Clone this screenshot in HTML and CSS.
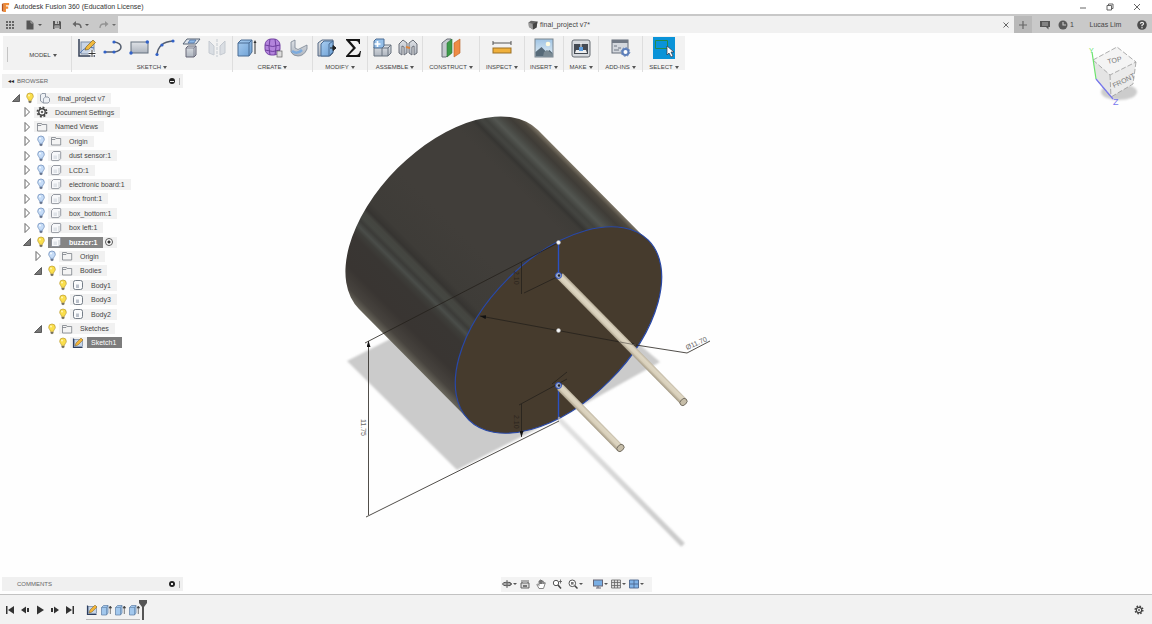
FILE: index.html
```html
<!DOCTYPE html>
<html lang="en">
<head>
<meta charset="utf-8">
<title>Autodesk Fusion 360 (Education License)</title>
<link rel="stylesheet" href="styles.css">
</head>
<body>
<svg class="defs" width="0" height="0" aria-hidden="true">
  <defs>
    <linearGradient id="blue" x1="0" y1="0" x2="1" y2="1"><stop offset="0" stop-color="#a9cdf0"/><stop offset="1" stop-color="#6b9fd4"/></linearGradient>
    <linearGradient id="grey" x1="0" y1="0" x2="0" y2="1"><stop offset="0" stop-color="#dfe2e6"/><stop offset="1" stop-color="#aeb5bf"/></linearGradient>
    <linearGradient id="sky" x1="0" y1="0" x2="0" y2="1"><stop offset="0" stop-color="#9fc4e4"/><stop offset="1" stop-color="#e6f0f6"/></linearGradient>
  </defs>
  <symbol id="closed" viewBox="0 0 12 12"><path d="M4 1.500v9L8.500 6z" fill="#fff" stroke="#666" stroke-width="1"/></symbol>
  <symbol id="open" viewBox="0 0 12 12"><path d="M9.500 2.500v7h-7z" fill="#777" stroke="#444" stroke-width=".8"/></symbol>
  <symbol id="bulb-on" viewBox="0 0 12 12"><path d="M6 1a3.3 3.3 0 0 0-3.3 3.3C2.700 6 4.300 6.600 4.500 8.400h3C7.700 6.600 9.300 6 9.300 4.300A3.300 3.300 0 0 0 6 1z" fill="#fbdf4c" stroke="#b99a2e" stroke-width=".7"/><path d="M4.500 9h3v1.200L6 11.200 4.500 10.200z" fill="#77705a"/><circle cx="5" cy="3.500" r="1" fill="#fff6b8"/></symbol>
  <symbol id="bulb-off" viewBox="0 0 12 12"><path d="M6 1a3.3 3.3 0 0 0-3.3 3.3C2.700 6 4.300 6.600 4.500 8.400h3C7.700 6.600 9.300 6 9.300 4.300A3.300 3.300 0 0 0 6 1z" fill="#c6dcf7" stroke="#7290bd" stroke-width=".8"/><path d="M4.500 9h3v1.200L6 11.200 4.500 10.200z" fill="#66738c"/><circle cx="5" cy="3.500" r="1" fill="#f5faff"/></symbol>
  <symbol id="folder" viewBox="0 0 12 12"><path d="M1.500 10V2.500h4l.7 1h4.500V10z M1.500 4.500h3.500l1-1" fill="#f4f4f4" stroke="#7a7f86" stroke-width=".8"/></symbol>
  <symbol id="component" viewBox="0 0 12 12"><path d="M1.500 4q0-.6.500-1L3.500 1.500H10q.7 0 .7.700V8.500L9 10.300q-.3.300-.8.300H2.200q-.7 0-.7-.7z" fill="#f7f8fa" stroke="#7c828c" stroke-width=".8"/><path d="M9 10.300V4" stroke="#a9aeb6" stroke-width=".6"/><path d="M3.500 5.500h3.500v3.500H3.500z" fill="#dfe3e8"/></symbol>
  <symbol id="body" viewBox="0 0 12 12"><rect x="1.500" y="1.500" width="9" height="9" rx="2" fill="#fafbfc" stroke="#68707c" stroke-width=".9"/><path d="M4 5.500h3V9H4z" fill="#bac0ca"/></symbol>
  <symbol id="assembly" viewBox="0 0 12 12"><path d="M1.500 3L3 1.500h3.500V5H9l1.500 1.500v3L9 11H4.500L1.500 9z" fill="#eef1f5" stroke="#7c8796" stroke-width=".8"/><path d="M4.500 11V6.500L6.500 5" fill="none" stroke="#7c8796" stroke-width=".7"/></symbol>
  <symbol id="gear" viewBox="0 0 12 12"><circle cx="6" cy="6" r="4.600" fill="none" stroke="#444" stroke-width="1.700" stroke-dasharray="1.900 1.712"/><circle cx="6" cy="6" r="3.200" fill="#fff" stroke="#444" stroke-width="1.400"/><circle cx="6" cy="6" r="1.300" fill="#666"/></symbol>
  <symbol id="sketch-small" viewBox="0 0 12 12"><path d="M1.500 1.500v9h9" fill="none" stroke="#2c3e60" stroke-width="1.200"/><rect x="2.500" y="2.500" width="8" height="7" fill="#c5d4e8" stroke="#5d7393" stroke-width=".6"/><path d="M3 9l1-3 5-5 2 2-5 5z" fill="#f2b437" stroke="#7d622c" stroke-width=".5"/></symbol>
  <symbol id="extrude-small" viewBox="0 0 12 12"><path d="M1.500 3.500L3.500 1.500H8V9L6.500 11h-5z" fill="#a3c8ed" stroke="#5d7da3" stroke-width=".7"/><path d="M1.500 3.500h5V11M6.500 3.500L8 1.500" fill="none" stroke="#5d7da3" stroke-width=".6"/><path d="M10.300 3v7M9 4l1.300-2 1.300 2z" stroke="#444" stroke-width=".7" fill="#444"/></symbol>
</svg>

<header class="titlebar">
  <svg class="logo" viewBox="0 0 10 10"><path d="M1 1l2-1v10L1 9z" fill="#b5511b"/><path d="M3 0h6v2.500H5.500v1.500H8v2.500H5.500V10H3z" fill="#ef8b36"/></svg>
  <h1 class="app-title">Autodesk Fusion 360 (Education License)</h1>
  <div class="window-controls">
    <button aria-label="Minimize"><svg viewBox="0 0 10 10"><path d="M2 6h6" stroke="#666"/></svg></button>
    <button aria-label="Restore"><svg viewBox="0 0 10 10"><path d="M2 3.500h4.500v4.500H2zM3.500 3.500V2H8v4.500H6.500" fill="none" stroke="#555" stroke-width=".9"/></svg></button>
    <button aria-label="Close"><svg viewBox="0 0 10 10"><path d="M2 2l6 6M8 2L2 8" stroke="#555" stroke-width=".9"/></svg></button>
  </div>
</header>

<nav class="tabbar">
  <div class="quick">
    <button aria-label="Data panel"><svg viewBox="0 0 10 10" fill="#666"><path d="M1 1h2v2H1zM4 1h2v2H4zM7 1h2v2H7zM1 4h2v2H1zM4 4h2v2H4zM7 4h2v2H7zM1 7h2v2H1zM4 7h2v2H4zM7 7h2v2H7z"/></svg></button>
    <button class="drop" aria-label="File"><svg viewBox="0 0 10 10"><path d="M1.500.5H6L8.500 3v6.500h-7z" fill="#555"/><path d="M6 .5V3h2.500" fill="none" stroke="#c8c8c8" stroke-width=".7"/></svg></button>
    <button aria-label="Save"><svg viewBox="0 0 10 10"><path d="M1 1h7l1 1v7H1z" fill="#555"/><path d="M3 1h4v3H3zM2.500 5.500h5V9h-5z" fill="#c4c4c4"/><path d="M5.500 1.500v2M3 7h4" stroke="#555" stroke-width=".8"/></svg></button>
    <button class="drop" aria-label="Undo"><svg viewBox="0 0 10 10"><path d="M2 4h3.500Q9 4 9 8" fill="none" stroke="#666" stroke-width="1.500"/><path d="M4 1v6L.5 4z" fill="#666"/></svg></button>
    <button class="drop faded" aria-label="Redo"><svg viewBox="0 0 10 10"><path d="M8 4H4.500Q1 4 1 8" fill="none" stroke="#888" stroke-width="1.300"/><path d="M6 1v6l3.500-3z" fill="#888"/></svg></button>
  </div>
  <div class="doc-tab">
    <svg class="doc-icon" viewBox="0 0 10 10"><path d="M.5 2.500L3 .8l6.500.7-1 6L5 9.500 1 7z" fill="#666"/><path d="M.5 2.500L4.800 4 5 9.500 1 7z" fill="#9a9a9a"/><path d="M4.800 4l4.700-2.500-1 6L5 9.500z" fill="#444"/></svg>
    <span>final_project v7*</span>
    <button class="tab-close" aria-label="Close tab"><svg viewBox="0 0 10 10"><path d="M2.500 2.500l5 5M7.500 2.500l-5 5" stroke="#666"/></svg></button>
  </div>
  <div class="account">
    <button class="new-tab" aria-label="New tab"><svg viewBox="0 0 10 10"><path d="M5 1v8M1 5h8" stroke="#666" stroke-width="1.200"/></svg></button>
    <button aria-label="Feedback"><svg class="wide" viewBox="0 0 12 10"><path d="M1 1h10v6H9.500V9.500L7 7H1z" fill="#555"/><path d="M3 3h6M3 5h6" stroke="#c9c9c9" stroke-width=".8"/></svg></button>
    <button class="jobs"><svg viewBox="0 0 10 10"><circle cx="5" cy="5" r="4.500" fill="#5a5a5a"/><path d="M5 2v3h3" fill="none" stroke="#ccc" stroke-width="1.100"/></svg>1</button>
    <button class="user">Lucas Lim</button>
    <button aria-label="Help"><svg viewBox="0 0 10 10"><circle cx="5" cy="5" r="4.800" fill="#4c4c4c"/><path d="M3.400 3.800Q3.500 2.300 5 2.300t1.600 1.400Q6.500 4.500 5 5.200v1" fill="none" stroke="#eee" stroke-width="1.200"/><circle cx="5" cy="7.700" r=".7" fill="#eee"/></svg></button>
  </div>
</nav>

<main class="workspace">
  <svg class="model" viewBox="0 33 1152 561" role="img" aria-label="Buzzer model">
    <defs>
      <linearGradient id="side" gradientUnits="userSpaceOnUse" x1="359" y1="309" x2="538" y2="130">
        <stop offset="0" stop-color="#68655b"/><stop offset=".03" stop-color="#47433e"/><stop offset=".09" stop-color="#393532"/><stop offset=".19" stop-color="#393633"/><stop offset=".215" stop-color="#3e3e3a"/><stop offset=".23" stop-color="#4a4d49"/><stop offset=".25" stop-color="#3b3b38"/><stop offset=".265" stop-color="#454742"/><stop offset=".285" stop-color="#444540"/><stop offset=".3" stop-color="#363431"/><stop offset=".33" stop-color="#3e3c38"/><stop offset=".5" stop-color="#413e3a"/><stop offset=".78" stop-color="#413e3a"/><stop offset=".835" stop-color="#3e3c38"/><stop offset=".85" stop-color="#363532"/><stop offset=".87" stop-color="#444541"/><stop offset=".885" stop-color="#40413d"/><stop offset=".91" stop-color="#535651"/><stop offset=".93" stop-color="#484944"/><stop offset=".955" stop-color="#3f3c37"/><stop offset=".98" stop-color="#4d483f"/><stop offset="1" stop-color="#81796a"/>
      </linearGradient>
      <linearGradient id="rodA" gradientUnits="userSpaceOnUse" x1="618" y1="341" x2="624" y2="335"><stop offset="0" stop-color="#a69c87"/><stop offset=".35" stop-color="#d9d0bb"/><stop offset=".7" stop-color="#ded6c3"/><stop offset="1" stop-color="#b5ab96"/></linearGradient>
      <linearGradient id="rodB" gradientUnits="userSpaceOnUse" x1="587" y1="420" x2="593" y2="414"><stop offset="0" stop-color="#a69c87"/><stop offset=".35" stop-color="#d9d0bb"/><stop offset=".7" stop-color="#ded6c3"/><stop offset="1" stop-color="#b5ab96"/></linearGradient>
      <linearGradient id="thin" gradientUnits="userSpaceOnUse" x1="559" y1="419" x2="684" y2="545"><stop offset="0" stop-color="#e2e2e2"/><stop offset="1" stop-color="#c9c9c9"/></linearGradient>
      <filter id="soft" x="-10%" y="-10%" width="120%" height="120%"><feGaussianBlur stdDeviation="1"/></filter>
      <marker id="arrow" viewBox="0 0 6 4" markerUnits="userSpaceOnUse" markerWidth="6" markerHeight="4" refX="6" refY="2" orient="auto-start-reverse"><path d="M0 0l6 2-6 2z" fill="#111"/></marker>
    </defs>
    <g filter="url(#soft)">
      <path d="M347 361L392 338 640 345 660 362 583 405 457 470z" fill="#cbcbcb"/>
      <path d="M559 419L683 545" stroke="url(#thin)" stroke-width="5"/>
    </g>
    <path d="M469 420L359 309A126 72 -45 0 1 538 130L648 241z" fill="url(#side)"/>
    <ellipse cx="558.500" cy="330" rx="127" ry="72" transform="rotate(-45 558.500 330)" fill="#463b2d" stroke="#2848a8" stroke-width="1.200"/>
    <g fill="none" stroke="#25211c" stroke-width=".8">
      <path d="M365 343L558 243M366 517L559 421"/>
      <path d="M368.500 341v174M521.500 262v32M521.500 404v33" marker-start="url(#arrow)" marker-end="url(#arrow)"/>
      <path d="M524 293L557 277M519 405L567 379M552 384L567 372"/>
      <path d="M480 316L636 345" marker-start="url(#arrow)" marker-end="url(#arrow)"/>
      <path d="M636 345L687 353 710 341"/>
    </g>
    <path d="M558.500 243v32M558.500 386v33" stroke="#2a50c4" stroke-width="1.400"/>
    <path d="M560 276L683 401" stroke="url(#rodA)" stroke-width="8" />
    <path d="M560 387L620 448" stroke="url(#rodB)" stroke-width="8"/>
    <g fill="#c6bda8" stroke="#6f6a5e" stroke-width=".9">
      <ellipse cx="683.500" cy="402" rx="4" ry="3" transform="rotate(-45 683.500 402)"/>
      <ellipse cx="620.500" cy="448" rx="4" ry="3" transform="rotate(-45 620.500 448)"/>
    </g>
    <g fill="#9eabc8" stroke="#2a50c4"><circle cx="558.500" cy="275.500" r="3"/><circle cx="558.500" cy="385.500" r="3"/></g>
    <g fill="#222"><circle cx="559" cy="275.500" r="1.200"/><circle cx="559" cy="385.500" r="1.200"/></g>
    <path d="M620 342L636 345" stroke="#6b655a" stroke-width=".8"/>
    <g fill="#f4f4f4" stroke="#aaa" stroke-width=".5"><circle cx="558.500" cy="242.500" r="2"/><circle cx="558.500" cy="330.500" r="2"/></g>
    <circle cx="559" cy="418" r="1.200" fill="#99a"/>
    <g class="dims">
      <text transform="translate(687 350) rotate(-24)">Ø11.70</text>
      <text transform="translate(361 419) rotate(90)">11.75</text>
      <text class="dim-dark" transform="translate(514 271) rotate(90)">2.10</text>
      <text class="dim-dark" transform="translate(514 415) rotate(90)">2.10</text>
    </g>
    <g>
      <ellipse cx="1119" cy="92" rx="18" ry="8" fill="#ccc" filter="url(#soft)"/>
      <path d="M1093 60L1117 47 1136 62 1110 75z" fill="#f4f4f4"/><path d="M1093 60L1110 75 1111 97 1096 79z" fill="#e4e4e4"/><path d="M1110 75L1136 62 1133 84 1111 97z" fill="#ebebeb"/>
      <path d="M1093 60L1117 47 1136 62 1110 75zM1110 75L1111 97M1136 62L1133 84 1111 97 1096 79" fill="none" stroke="#999" stroke-width=".8" stroke-dasharray="5 2"/>
      <path d="M1092 52L1096 79" stroke="#6be36b" stroke-width="1.200"/><path d="M1096 79L1113 99" stroke="#7777ee" stroke-width="1.200"/>
      <g class="cube-text"><text transform="translate(1108 64) rotate(-12)">TOP</text><text transform="translate(1114 88) rotate(-26)">FRONT</text><text class="axis-y" x="1089" y="53">Y</text><text class="axis-z" x="1113" y="105">Z</text></g>
    </g>
  </svg>

  <div class="toolbar">
    <div class="tool-group mode"><button class="menu">MODEL</button></div>
    <div class="tool-group">
      <div class="tools">
        <button aria-label="Create sketch"><svg viewBox="0 0 20 20"><path d="M2 1v17h16" fill="none" stroke="#333f55" stroke-width="1.500"/><rect x="4" y="4" width="13" height="12" fill="#c9d5e6" stroke="#7c8da6"/><path d="M3 15Q9 7 17 10" fill="none" stroke="#5077b5"/><path d="M8 12l1-3 7-7 2.500 2.500-7 7z" fill="#f0b93f" stroke="#80652c" stroke-width=".7"/><path d="M15 12v7M11.500 15.500h7" stroke="#fff" stroke-width="3"/><path d="M15 12v7M11.500 15.500h7" stroke="#333" stroke-width="1"/></svg></button>
        <button aria-label="Line"><svg viewBox="0 0 20 20"><path d="M2 14h9q7-1 7-5t-7-5" fill="none" stroke="#555f70" stroke-width="1.500"/><g fill="#3262c8"><circle cx="2" cy="14" r="1.600"/><circle cx="11" cy="14" r="1.600"/><circle cx="11" cy="4" r="1.600"/></g></svg></button>
        <button aria-label="Rectangle"><svg viewBox="0 0 20 20"><rect x="2" y="4" width="17" height="11" fill="url(#grey)" stroke="#65717f"/><circle cx="2" cy="15" r="1.700" fill="#3262c8"/><circle cx="18.300" cy="4" r="1.700" fill="#3262c8"/></svg></button>
        <button aria-label="Arc"><svg viewBox="0 0 20 20"><path d="M2 17Q3 4 18 3" fill="none" stroke="#555f70" stroke-width="1.400"/><g fill="#3262c8"><circle cx="2" cy="16.500" r="1.600"/><circle cx="7" cy="7" r="1.600"/><circle cx="18" cy="3" r="1.600"/></g></svg></button>
        <button aria-label="Project"><svg viewBox="0 0 20 20"><path d="M2 6L6 1h13l-4 5z" fill="#dfe5ed" stroke="#566272"/><path d="M7 5l2-3h6l-2 3z" fill="#8eb8e6" stroke="#47699a" stroke-width=".7"/><path d="M5 10l2-2h8v9l-2 2H5z" fill="url(#grey)" stroke="#667" /><path d="M5 10h8v9M13 10l2-2" fill="none" stroke="#667" stroke-width=".7"/></svg></button>
        <button class="disabled" aria-label="Mirror"><svg viewBox="0 0 20 20"><path d="M2 3l5 5v9l-5-2zM18 3l-5 5v9l5-2z" fill="#c3cbd6" stroke="#98a2b0"/><path d="M10 1v18" stroke="#98a2b0" stroke-dasharray="3 1"/></svg></button>
      </div>
      <button class="menu">SKETCH</button>
    </div>
    <div class="tool-group">
      <div class="tools">
        <button aria-label="Extrude"><svg viewBox="0 0 20 20"><path d="M1 5l3-3h11v12l-3 4H1z" fill="url(#blue)" stroke="#4a6c94"/><path d="M1 5h11v13M12 5l3-3" fill="none" stroke="#4a6c94"/><path d="M18 4v12" stroke="#333"/><path d="M16.500 5L18 2l1.500 3z" fill="#333"/></svg></button>
        <button aria-label="Create form"><svg viewBox="0 0 20 20"><rect x="2" y="1" width="15" height="16" rx="6" fill="#b384dc" stroke="#7645a5"/><path d="M2 7q8 3 15 0M2 12q8 3 15 0M7 1q-2 8 0 16M12 1q2 8 0 16" fill="none" stroke="#7040a0"/><rect x="14" y="13" width="5" height="6" fill="#ddd" stroke="#666" stroke-width=".7"/></svg></button>
        <button aria-label="Sheet metal"><svg viewBox="0 0 20 20"><path d="M2 4l4-2v8q3 3 6 0l6-3v4q-3 7-9 7-5 0-7-4z" fill="url(#grey)" stroke="#7a8492" stroke-width=".8"/><path d="M3 13q5 4 10-1" fill="none" stroke="#7dabdd" stroke-width="2.500"/></svg></button>
      </div>
      <button class="menu">CREATE</button>
    </div>
    <div class="tool-group">
      <div class="tools">
        <button aria-label="Press pull"><svg viewBox="0 0 20 20"><path d="M1 5l4-3h11v13l-3 3H1z" fill="url(#grey)" stroke="#566b86"/><path d="M4 6l3-3h9v11l-4 4H4z" fill="url(#blue)" stroke="#4a6c94"/><path d="M12 18V6l4-3" fill="none" stroke="#4a6c94"/><path d="M13 10h3" stroke="#222"/><path d="M16 7.500l3 2.500-3 2.500z" fill="#222" stroke="#222"/></svg></button>
        <button aria-label="Parameters"><svg viewBox="0 0 20 20"><path d="M3 1h14v5h-1q-.5-3-3-3H7l6 7-7 7h7q3 0 4-4h1l-1 6H3v-1l7-8-7-8z" fill="#151515"/></svg></button>
      </div>
      <button class="menu">MODIFY</button>
    </div>
    <div class="tool-group">
      <div class="tools">
        <button aria-label="New component"><svg viewBox="0 0 20 20"><path d="M2 9h8l2-2h7v8l-3 3H2z" fill="url(#grey)" stroke="#69727f"/><path d="M2 3l2-2h8v7l-2 2H2z" fill="#95bfe8" stroke="#4a6c94"/><path d="M10 10v8M10 10h6v8M16 10l3-3" fill="none" stroke="#69727f"/><path d="M5.500 3v6M2.500 6h6" stroke="#fff" stroke-width="1.700"/></svg></button>
        <button aria-label="Joint"><svg viewBox="0 0 20 20"><path d="M1 6l4-4 4 3v10l-3 2V9L4 8v9l-3-2z" fill="url(#grey)" stroke="#6a6f78"/><path d="M19 6l-4-4-4 3v10l3 2V9l2-1v9l3-2z" fill="url(#grey)" stroke="#6a6f78"/><path d="M8 9l4 1" stroke="#dd8339" stroke-width="2"/></svg></button>
      </div>
      <button class="menu">ASSEMBLE</button>
    </div>
    <div class="tool-group">
      <div class="tools"><button aria-label="Offset plane"><svg viewBox="0 0 20 20"><path d="M1 5l5-4h4v14l-5 4H1z" fill="#c5c9cf" stroke="#6a6f78"/><path d="M6 5l5-4v14l-5 4z" fill="#3d9b49" stroke="#2b7235" stroke-width=".6"/><path d="M13 5l6-4v14l-6 4z" fill="#ef8c45" stroke="#b55c20" stroke-width=".6"/></svg></button></div>
      <button class="menu">CONSTRUCT</button>
    </div>
    <div class="tool-group">
      <div class="tools"><button aria-label="Measure"><svg viewBox="0 0 20 20"><path d="M1 5h18M1 3v4M19 3v4" stroke="#555"/><rect x="1" y="10" width="18" height="5" fill="#f0b03b" stroke="#9b7026"/></svg></button></div>
      <button class="menu">INSPECT</button>
    </div>
    <div class="tool-group">
      <div class="tools"><button aria-label="Insert image"><svg viewBox="0 0 20 20"><rect x="1" y="1" width="18" height="18" fill="url(#sky)" stroke="#7a858e"/><circle cx="14" cy="6" r="2.300" fill="#fffce0"/><path d="M1.500 14l6-5 5 5 3-2 3 3v3.500h-17z" fill="#566a78"/><path d="M10 14l3-2 5.500 4v2.500H9z" fill="#7a8a93"/></svg></button></div>
      <button class="menu">INSERT</button>
    </div>
    <div class="tool-group">
      <div class="tools"><button aria-label="3D print"><svg viewBox="0 0 20 20"><rect x="1" y="2" width="18" height="17" rx="2" fill="#d7dade" stroke="#666c73"/><rect x="3" y="6" width="14" height="10" fill="#444a52"/><path d="M5 12h10l1 3H4z" fill="#eee"/><path d="M8 9h4v4H8z" fill="#5d9ee0"/><path d="M10 5v4" stroke="#fff"/></svg></button></div>
      <button class="menu">MAKE</button>
    </div>
    <div class="tool-group">
      <div class="tools"><button aria-label="Scripts and add-ins"><svg viewBox="0 0 20 20"><rect x="1" y="2" width="16" height="13" fill="#d3d7dd" stroke="#646c79"/><path d="M1 2h16v3H1z" fill="#717985"/><path d="M3 8h3M7 10h3M3 12h5" stroke="#6e7683"/><circle cx="14.500" cy="14" r="3" fill="#fff" stroke="#5d7fba" stroke-width="2"/><circle cx="14.500" cy="14" r="4.300" fill="none" stroke="#5d7fba" stroke-dasharray="1.700 1.600"/></svg></button></div>
      <button class="menu">ADD-INS</button>
    </div>
    <div class="tool-group">
      <div class="tools"><button class="active" aria-label="Select"><svg viewBox="0 0 22 22"><path d="M2.500 3.500h12v8h-12z" fill="none" stroke="#248a4d"/><path d="M14 9v9l2-2 2 4 2-1-2-4h3z" fill="#fff" stroke="#334" stroke-width=".7"/></svg></button></div>
      <button class="menu">SELECT</button>
    </div>
  </div>

  <aside class="browser">
    <div class="panel-head"><button class="collapse" aria-label="Collapse">◂◂</button><h2>BROWSER</h2><button class="dot" aria-label="Hide all"></button><i class="grip"></i></div>
    <ul class="tree">
      <li class="l0"><svg><use href="#open"/></svg><svg><use href="#bulb-on"/></svg><span class="pill"><svg><use href="#assembly"/></svg><span class="name">final_project v7</span></span></li>
      <li class="l1"><svg><use href="#closed"/></svg><span class="pill"><svg><use href="#gear"/></svg><span class="name">Document Settings</span></span></li>
      <li class="l1"><svg><use href="#closed"/></svg><span class="pill"><svg><use href="#folder"/></svg><span class="name">Named Views</span></span></li>
      <li class="l1"><svg><use href="#closed"/></svg><svg><use href="#bulb-off"/></svg><span class="pill"><svg><use href="#folder"/></svg><span class="name">Origin</span></span></li>
      <li class="l1"><svg><use href="#closed"/></svg><svg><use href="#bulb-off"/></svg><span class="pill"><svg><use href="#component"/></svg><span class="name">dust sensor:1</span></span></li>
      <li class="l1"><svg><use href="#closed"/></svg><svg><use href="#bulb-off"/></svg><span class="pill"><svg><use href="#component"/></svg><span class="name">LCD:1</span></span></li>
      <li class="l1"><svg><use href="#closed"/></svg><svg><use href="#bulb-off"/></svg><span class="pill"><svg><use href="#component"/></svg><span class="name">electronic board:1</span></span></li>
      <li class="l1"><svg><use href="#closed"/></svg><svg><use href="#bulb-off"/></svg><span class="pill"><svg><use href="#component"/></svg><span class="name">box front:1</span></span></li>
      <li class="l1"><svg><use href="#closed"/></svg><svg><use href="#bulb-off"/></svg><span class="pill"><svg><use href="#component"/></svg><span class="name">box_bottom:1</span></span></li>
      <li class="l1"><svg><use href="#closed"/></svg><svg><use href="#bulb-off"/></svg><span class="pill"><svg><use href="#component"/></svg><span class="name">box left:1</span></span></li>
      <li class="l1"><svg><use href="#open"/></svg><svg><use href="#bulb-on"/></svg><span class="pill current"><svg><use href="#component"/></svg><span class="name">buzzer:1</span></span><label class="activate"><input type="radio" name="active" checked aria-label="Activate buzzer:1"></label></li>
      <li class="l2"><svg><use href="#closed"/></svg><svg><use href="#bulb-off"/></svg><span class="pill"><svg><use href="#folder"/></svg><span class="name">Origin</span></span></li>
      <li class="l2"><svg><use href="#open"/></svg><svg><use href="#bulb-on"/></svg><span class="pill"><svg><use href="#folder"/></svg><span class="name">Bodies</span></span></li>
      <li class="l3"><svg><use href="#bulb-on"/></svg><span class="pill"><svg><use href="#body"/></svg><span class="name">Body1</span></span></li>
      <li class="l3"><svg><use href="#bulb-on"/></svg><span class="pill"><svg><use href="#body"/></svg><span class="name">Body3</span></span></li>
      <li class="l3"><svg><use href="#bulb-on"/></svg><span class="pill"><svg><use href="#body"/></svg><span class="name">Body2</span></span></li>
      <li class="l2"><svg><use href="#open"/></svg><svg><use href="#bulb-on"/></svg><span class="pill"><svg><use href="#folder"/></svg><span class="name">Sketches</span></span></li>
      <li class="l3"><svg><use href="#bulb-on"/></svg><span class="pill picked"><svg><use href="#sketch-small"/></svg><span class="name">Sketch1</span></span></li>
    </ul>
  </aside>

  <div class="bottom-row">
    <div class="panel-head comments"><h2>COMMENTS</h2><button class="dot plus" aria-label="Add comment"></button><i class="grip"></i></div>
    <div class="viewbar">
      <button class="drop" aria-label="Orbit"><svg viewBox="0 0 10 10"><ellipse cx="5" cy="5" rx="4.500" ry="1.800" fill="none" stroke="#555"/><path d="M5 1v8M1 5h8M7 3l2.500 2L7 7" fill="none" stroke="#555" stroke-width=".9"/></svg></button>
      <button aria-label="Look at"><svg viewBox="0 0 10 10"><path d="M1 4h8v5H1zM2 4V1M8 4V1M3 2h4" fill="#ddd" stroke="#555" stroke-width=".9"/><path d="M3 6h4v2H3z" fill="#777"/></svg></button>
      <button aria-label="Pan"><svg viewBox="0 0 10 10"><path d="M3 9.500L.8 5.500l.8-.5L3 6.500V2h1v3V1h1v4-3.500h1V5l.2-3h1L7.800 5l.7-1.500.8.3L8 8l-.6 1.500z" fill="#fff" stroke="#555" stroke-width=".7"/></svg></button>
      <button aria-label="Zoom"><svg viewBox="0 0 10 10"><circle cx="4" cy="4" r="2.700" fill="#fff" stroke="#555"/><path d="M6 6l3 3.500" stroke="#444" stroke-width="1.500"/><path d="M8.500.5v4M7 2.500h3" stroke="#555" stroke-width=".8"/></svg></button>
      <button class="drop" aria-label="Fit"><svg viewBox="0 0 10 10"><circle cx="4.300" cy="4.300" r="3.300" fill="#fff" stroke="#555"/><rect x="3" y="3" width="2.600" height="2.600" fill="#777"/><path d="M6.800 6.800l2.700 2.700" stroke="#444" stroke-width="1.500"/></svg></button>
      <button class="drop push" aria-label="Display settings"><svg viewBox="0 0 10 10"><rect x=".5" y="1" width="9" height="6" fill="#79aee4" stroke="#667"/><path d="M3 9h5M5 7v2" stroke="#667"/></svg></button>
      <button class="drop" aria-label="Grid"><svg viewBox="0 0 10 10"><path d="M.5 1h9v8h-9zM.5 3.500h9M.5 6.500h9M3.500 1v8M6.500 1v8" fill="#ddd" stroke="#666" stroke-width=".8"/></svg></button>
      <button class="drop" aria-label="Viewports"><svg viewBox="0 0 10 10"><path d="M.5 1h9v8h-9zM5 1v8M.5 5h9" fill="#82b4e8" stroke="#4c6690" stroke-width=".9"/></svg></button>
    </div>
  </div>
</main>

<footer class="timeline">
  <div class="playback">
    <button aria-label="Go to start"><svg viewBox="0 0 10 10"><path d="M1 1h1.500v8H1zM9 1v8L3 5z" fill="#333"/></svg></button>
    <button aria-label="Step back"><svg viewBox="0 0 10 10"><path d="M6 1.500v7L1 5zM7 3h2v4H7z" fill="#333"/></svg></button>
    <button aria-label="Play"><svg viewBox="0 0 10 10"><path d="M2 .5v9L9 5z" fill="#333"/></svg></button>
    <button aria-label="Step forward"><svg viewBox="0 0 10 10"><path d="M4 1.500v7L9 5zM1 3h2v4H1z" fill="#333"/></svg></button>
    <button aria-label="Go to end"><svg viewBox="0 0 10 10"><path d="M7.500 1H9v8H7.500zM1 1v8l6-4z" fill="#333"/></svg></button>
  </div>
  <div class="features">
    <button aria-label="Sketch"><svg><use href="#sketch-small"/></svg></button>
    <button aria-label="Extrude 1"><svg><use href="#extrude-small"/></svg></button>
    <button aria-label="Extrude 2"><svg><use href="#extrude-small"/></svg></button>
    <button aria-label="Extrude 3"><svg><use href="#extrude-small"/></svg></button>
  </div>
  <svg class="marker" viewBox="0 0 8 20"><path d="M0 0h8v3L5 7v13H3V7L0 3z" fill="#555"/></svg>
  <button class="settings" aria-label="Timeline settings"><svg><use href="#gear"/></svg></button>
</footer>
</body>
</html>
```
FILE: styles.css
```css
* { box-sizing: border-box; }

body {
  margin: 0;
  height: 100vh;
  display: flex;
  flex-direction: column;
  overflow: hidden;
  background: #fefefe;
  color: #444;
  font: 7px/10px "Liberation Sans", Arial, sans-serif;
}

button {
  display: flex;
  align-items: center;
  justify-content: center;
  padding: 0;
  border: 0;
  background: none;
  color: inherit;
  font: inherit;
}

svg { display: block; flex: none; }
h1, h2 { margin: 0; font-weight: normal; }
.defs { position: absolute; }

/* Title bar */
.titlebar {
  display: flex;
  align-items: center;
  height: 14px;
  padding: 0 10px 0 1px;
  background: #fff;
}
.logo { width: 9px; height: 9px; margin-right: 4px; }
.app-title { font-size: 7px; color: #333; }
.window-controls { display: flex; gap: 17px; margin-left: auto; }
.window-controls svg { width: 10px; height: 10px; }

/* Document tabs */
.tabbar {
  display: flex;
  height: 19px;
  border-top: 2px solid #c8c8c8;
  background: #f1f1f1;
}
.tabbar svg { width: 10px; height: 10px; }
.tabbar .wide { width: 12px; }
.quick {
  display: flex;
  align-items: center;
  gap: 10px;
  width: 118px;
  padding-left: 5px;
  background: #c9c9c9;
}
.drop::after {
  content: "";
  margin-left: 3px;
  border: 2px solid transparent;
  border-top-color: #555;
  border-bottom: 0;
}
.faded { opacity: .8; }
.doc-tab {
  display: flex;
  flex: 1;
  align-items: center;
  gap: 2px;
  padding-left: 4px;
}
.doc-icon { margin-left: auto; }
.tab-close { margin-left: auto; padding: 0 3px; }
.account {
  display: flex;
  align-items: center;
  gap: 7px;
  width: 138px;
  padding-right: 5px;
  background: #c9c9c9;
}
.new-tab { width: 18px; height: 17px; background: #b9b9b9; }
.jobs { gap: 2px; }
.user { margin: 0 auto; }

/* Workspace */
.workspace {
  position: relative;
  display: flex;
  flex: 1;
  flex-direction: column;
  align-items: flex-start;
  min-height: 0;
}
.model { position: absolute; inset: 0; width: 100%; height: 100%; }
.dims text { font-size: 7px; fill: #666; }
.dims .dim-dark { fill: #2c251d; }
.cube-text text { font-size: 7px; fill: #777; }
.cube-text .axis-y { fill: #6be36b; }
.cube-text .axis-z { font-size: 9px; fill: #7777ee; }

.toolbar {
  position: relative;
  display: grid;
  grid-template-columns: 69px 161px 80px 55px 55px 57px 45px 39px 35px 44px 42px;
  height: 34px;
  margin: 3px 0 0 3px;
  background: #f2f2f2;
}
.tool-group {
  display: flex;
  flex-direction: column;
  align-items: center;
  gap: 2px;
  border-right: 1px solid #dedede;
}
.tool-group:last-child { border-right: 0; }
.mode {
  justify-content: center;
  padding: 2px 0 0 12px;
  background: linear-gradient(90deg, #c4c4c4 1px, transparent 1px) 4px 50% / 3px 15px no-repeat;
}
.tools { display: flex; align-items: center; gap: 6px; height: 24px; }
.tools svg { width: 20px; height: 20px; }
.tools .active { background: #0a93d8; }
.tools .active svg { width: 22px; height: 22px; }
.disabled { opacity: .5; }
.menu { height: 10px; font-size: 6px; line-height: 10px; white-space: nowrap; }
.menu::after {
  content: "";
  margin-left: 2px;
  border: 2px solid transparent;
  border-top: 3px solid #555;
  border-bottom: 0;
}

/* Browser panel */
.browser { position: relative; margin: 4px 0 0 2px; }
.panel-head {
  display: flex;
  align-items: center;
  width: 181px;
  height: 14px;
  padding: 0 1px 0 3px;
  background: #f0f0f0;
}
.panel-head h2 { font-size: 6px; color: #666; }
.collapse { width: 12px; font-size: 6px; color: #222; }
.dot {
  width: 6px;
  height: 6px;
  margin-left: auto;
  border-radius: 3px;
  background: linear-gradient(#eee, #eee) 50% 50% / 4px 1px no-repeat #222;
}
.dot.plus { background: radial-gradient(#eee 1px, #222 1px); }
.grip { width: 3px; height: 7px; margin-left: 4px; border-left: 1px solid #aaa; }
.tree {
  display: flex;
  flex-direction: column;
  justify-content: space-between;
  height: 259px;
  margin: 3px 0 0;
  padding: 0;
  list-style: none;
}
.tree li { display: flex; align-items: center; height: 14px; }
.tree svg { width: 12px; height: 12px; margin: 0 1px; }
.tree .l0 { padding-left: 7px; }
.tree .l1 { padding-left: 18px; }
.tree .l2 { padding-left: 29px; }
.tree .l3 { padding-left: 54px; }
.pill {
  display: flex;
  align-items: center;
  height: 11px;
  padding-left: 1px;
  background: #f1f1f1;
}
.name { height: 11px; padding: 0 6px 0 6px; line-height: 11px; }
.current { background: #858585; }
.current .name { font-weight: bold; color: #fff; }
.picked .name { margin-left: 2px; padding-left: 4px; background: #7c7c7c; color: #fff; }
.activate { display: flex; align-items: center; height: 11px; padding: 0 4px 0 2px; background: #f1f1f1; }
.activate input {
  appearance: none;
  width: 8px;
  height: 8px;
  margin: 0;
  border: 1px solid #555;
  border-radius: 50%;
  background: radial-gradient(#333 1px, #fff 2px);
}

/* Bottom row of the workspace */
.bottom-row {
  position: relative;
  display: flex;
  align-items: center;
  justify-content: center;
  width: 100%;
  height: 16px;
  margin: auto 0 2px;
}
.comments { position: absolute; left: 2px; padding-left: 15px; }
.viewbar {
  display: flex;
  align-items: center;
  gap: 6px;
  width: 151px;
  height: 15px;
  padding-left: 1px;
  background: #f3f3f3;
}
.viewbar svg { width: 10px; height: 10px; }
.viewbar .drop { margin-right: -3px; }
.viewbar .drop::after { margin-left: 1px; }
.viewbar .push { margin-left: 7px; }

/* Timeline */
.timeline {
  display: flex;
  align-items: center;
  height: 30px;
  padding: 0 8px 0 5px;
  border-top: 1px solid #c2c2c2;
  background: #f2f2f2;
}
.playback { display: flex; gap: 5px; }
.playback svg { width: 10px; height: 10px; }
.features {
  display: flex;
  gap: 2px;
  height: 19px;
  margin: 2px 0 0 11px;
  border-bottom: 1px solid #bbb;
}
.features svg { width: 12px; height: 12px; }
.marker { width: 8px; height: 20px; margin-left: -1px; }
.settings { margin-left: auto; }
.settings svg { width: 10px; height: 10px; }
```
